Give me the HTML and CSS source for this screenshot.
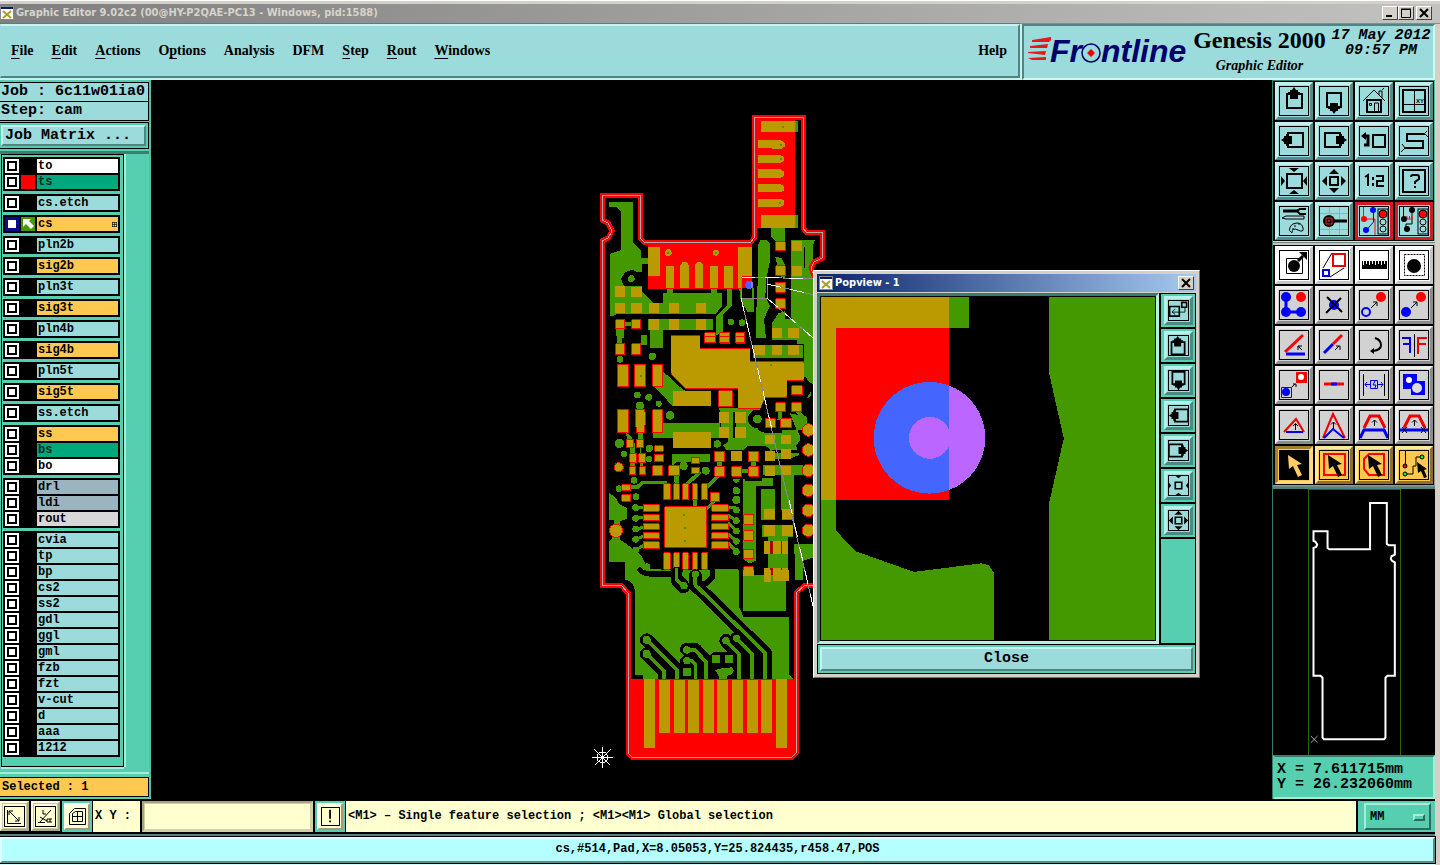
FILE: index.html
```html
<!DOCTYPE html>
<html lang="en">
<head>
<meta charset="utf-8">
<title>Graphic Editor 9.02c2</title>
<link rel="stylesheet" href="styles.css">
</head>
<body>
<svg class="defs" aria-hidden="true">
  <defs>
    <g id="app-x"><rect width="14" height="14" fill="#fff"/><rect width="14" height="3" fill="#0a1a6a"/><path d="M3 5l8 7M11 5l-8 7" stroke="#a8a020" stroke-width="2" fill="none"/><rect x=".5" y=".5" width="13" height="13" fill="none" stroke="#888"/></g>
    <g id="i-up"><path d="M8 8h15v14H8z" fill="none" stroke="#000" stroke-width="2"/><path d="M15 1l2 3h2v2h2v2h-2v5h-8V8H9V6h2V4h2z"/></g>
    <g id="i-down"><path d="M8 7h14v14H8z" fill="none" stroke="#000" stroke-width="2"/><path d="M15 28l-2-3h-2v-2H9v-2h2v-4h8v4h2v2h-2v2h-2z"/></g>
    <g id="i-left"><path d="M9 7h15v14H9z" fill="none" stroke="#000" stroke-width="2"/><path d="M2 14l3-2v-2h2V8h2v2h4v8H9v2H7v-2H5v-2z"/></g>
    <g id="i-right"><path d="M6 7h15v14H6z" fill="none" stroke="#000" stroke-width="2"/><path d="M28 14l-3 2v2h-2v2h-2v-2h-4v-8h4V8h2v2h2v2z"/></g>
    <g id="i-out"><path d="M11 11h8v8h-8z" fill="none" stroke="#000" stroke-width="2"/><path d="M15 3l5 5h-10zM15 27l5-5h-10zM3 15l5-5v10zM27 15l-5-5v10z"/></g>
    <g id="i-in"><path d="M15 6l-5-4h10zM15 24l-5 4h10zM6 15l-4-5v10zM24 15l4-5v10z"/></g>
    <g id="i-arrow"><path d="M9 5l1 14 4-3 5 11 4-2-5-10 5-1z"/></g>
    <g id="i-light"><rect x="19" y="3" width="10" height="25" fill="#9cdbdb" stroke="#000"/><circle cx="24" cy="8" r="4" fill="#f00" stroke="#000"/><circle cx="24" cy="16" r="3" fill="none" stroke="#000"/><circle cx="24" cy="23" r="3" fill="none" stroke="#000"/></g>
  </defs>
</svg>

<header class="titlebar">
  <svg class="appicon" viewBox="0 0 14 14"><use href="#app-x"/></svg>
  <h1 class="titletext">Graphic Editor 9.02c2 (00@HY-P2QAE-PC13 - Windows, pid:1588)</h1>
  <button class="winbtn" aria-label="Minimize"><svg viewBox="0 0 10 10"><path d="M1 8h6" stroke="#000" stroke-width="2"/></svg></button>
  <button class="winbtn" aria-label="Maximize"><svg viewBox="0 0 10 10"><path d="M.5 1.5h9v8h-9zM0 1h10" stroke="#000" fill="none"/></svg></button>
  <button class="winbtn winclose" aria-label="Close window"><svg viewBox="0 0 10 10"><path d="M1 1l8 8M9 1l-8 8" stroke="#000" stroke-width="2"/></svg></button>
</header>

<div class="app">
<div class="top">
  <nav class="menubar">
    <button class="menu"><u>F</u>ile</button>
    <button class="menu"><u>E</u>dit</button>
    <button class="menu"><u>A</u>ctions</button>
    <button class="menu">O<u>p</u>tions</button>
    <button class="menu">Analysis</button>
    <button class="menu">DFM</button>
    <button class="menu"><u>S</u>tep</button>
    <button class="menu"><u>R</u>out</button>
    <button class="menu"><u>W</u>indows</button>
    <button class="menu help">Help</button>
  </nav>
  <div class="brand">
    <svg class="logo" viewBox="0 0 166 44" role="img" aria-label="Frontline">
      <g fill="#e81818"><path d="M4 8l19-3v3l-2 2H4zM2 14l18-2-1 4H2zM0 20l18-1-1 4-17-2zM0 26l18-1v3H4z"/></g>
      <text x="22" y="30" class="logotext">Fr</text>
      <text x="73" y="30" class="logotext">ntline</text>
      <circle cx="63" cy="21" r="9" fill="none" stroke="#00006c" stroke-width="1.5"/>
      <path d="M63 17l4 4-4 4-4-4z" fill="#e00"/>
    </svg>
    <div class="product"><strong class="pname">Genesis 2000</strong><em class="psub">Graphic Editor</em></div>
    <time class="clock">17 May 2012<br>09:57 PM</time>
  </div>
</div>

<main class="work">
  <aside class="side">
    <div class="jobinfo">Job : 6c11w01ia0</div>
    <div class="jobinfo stepinfo">Step: cam</div>
    <div class="matrixbox"><button class="matrix">Job Matrix ...</button></div>
    <div class="layerarea">
      <div class="layers">
        <div class="grp">
          <label class="row"><input type="checkbox"><i></i><span class="white">to</span></label>
          <label class="row"><input type="checkbox"><i class="red"></i><span class="green">ts</span></label>
        </div>
        <div class="grp"><label class="row"><input type="checkbox"><i></i><span>cs.etch</span></label></div>
        <div class="grp"><label class="row"><input type="checkbox" checked><i class="work-layer"><svg viewBox="0 0 14 14"><path d="M2 2h8L8 4l5 5-3 3-5-5-3 3z" fill="#fff"/></svg></i><span class="gold">cs<svg class="mark" viewBox="0 0 5 5"><path d="M0 .5h5M0 2.500h5M0 4.500h5M.5 0v5M2.500 0v5M4.500 0v5" stroke="#000" stroke-width=".6"/></svg></span></label></div>
        <div class="grp"><label class="row"><input type="checkbox"><i></i><span>pln2b</span></label></div>
        <div class="grp"><label class="row"><input type="checkbox"><i></i><span class="gold">sig2b</span></label></div>
        <div class="grp"><label class="row"><input type="checkbox"><i></i><span>pln3t</span></label></div>
        <div class="grp"><label class="row"><input type="checkbox"><i></i><span class="gold">sig3t</span></label></div>
        <div class="grp"><label class="row"><input type="checkbox"><i></i><span>pln4b</span></label></div>
        <div class="grp"><label class="row"><input type="checkbox"><i></i><span class="gold">sig4b</span></label></div>
        <div class="grp"><label class="row"><input type="checkbox"><i></i><span>pln5t</span></label></div>
        <div class="grp"><label class="row"><input type="checkbox"><i></i><span class="gold">sig5t</span></label></div>
        <div class="grp"><label class="row"><input type="checkbox"><i></i><span>ss.etch</span></label></div>
        <div class="grp">
          <label class="row"><input type="checkbox"><i></i><span class="gold">ss</span></label>
          <label class="row"><input type="checkbox"><i></i><span class="green">bs</span></label>
          <label class="row"><input type="checkbox"><i></i><span class="white">bo</span></label>
        </div>
        <div class="grp">
          <label class="row"><input type="checkbox"><i></i><span class="slate">drl</span></label>
          <label class="row"><input type="checkbox"><i></i><span class="slate">ldi</span></label>
          <label class="row"><input type="checkbox"><i></i><span class="grey">rout</span></label>
        </div>
        <div class="grp">
          <label class="row"><input type="checkbox"><i></i><span>cvia</span></label>
          <label class="row"><input type="checkbox"><i></i><span>tp</span></label>
          <label class="row"><input type="checkbox"><i></i><span>bp</span></label>
          <label class="row"><input type="checkbox"><i></i><span>cs2</span></label>
          <label class="row"><input type="checkbox"><i></i><span>ss2</span></label>
          <label class="row"><input type="checkbox"><i></i><span>gdl</span></label>
          <label class="row"><input type="checkbox"><i></i><span>ggl</span></label>
          <label class="row"><input type="checkbox"><i></i><span>gml</span></label>
          <label class="row"><input type="checkbox"><i></i><span>fzb</span></label>
          <label class="row"><input type="checkbox"><i></i><span>fzt</span></label>
          <label class="row"><input type="checkbox"><i></i><span>v-cut</span></label>
          <label class="row"><input type="checkbox"><i></i><span>d</span></label>
          <label class="row"><input type="checkbox"><i></i><span>aaa</span></label>
          <label class="row"><input type="checkbox"><i></i><span>1212</span></label>
        </div>
      </div>
    </div>
    <div class="selected">Selected : 1</div>
  </aside>

  <section class="stage">
    <svg class="board" viewBox="151 80 1121 719" shape-rendering="crispEdges">
      <!-- top third of the board -->
      <g transform="translate(590 105) scale(.33333)">
        <g fill="#449900">
          <path d="M57 292h71v118l24 25v23h23v18h-20v24l-12 2-18-8-20 8-12 20 8 20-23 4v84l-18 4V447l33-11V318l-15-13H57z"/>
          <circle cx="124" cy="521" r="10"/>
          <path d="M155 560l35 35h30v-32h12v-15h18v15h112v-15h20v15h14v42l-20 22H75v-84h80z"/>
          <path d="M175 643h193v32H180v40h38v-40h-43z"/>
          <path d="M412 548h14v55l-28 28v50l-20 10v-55l34-36z"/>
          <circle cx="423" cy="651" r="10"/><circle cx="456" cy="653" r="10"/>
          <path d="M543 365h42v43h-30l-12-15z"/>
          <path d="M512 405h18l10 12v50l-12 60-2 50 14 25-18 40 6 58h-30v-60l5-105V420z"/>
          <path d="M448 550h44v70h-20l-22-40zM555 455l20 4 10 20v140l-20 6-20 30 8 45h117V405h5l-30 15v70l-38-2v155h-22V520l-12-5z"/>
          <path d="M603 405h72l-5 12-28 10v70l20 30v20l8 20v150h-50V640h-17z"/>
          <path d="M78 670h24v30H80zM152 690h20v30h-20zM545 670h90v35h-90zM82 683h15v30h-15zM90 650h60v14H90z"/>
        </g>
        <path fill="#f00" d="M174 420h280v131H174zM444 420h41v131h-41zM495 38h120v294h-120zM495 332h20v36h-20z"/>
        <path fill="#000" d="M615 38h21v330h-13v-36h-8z"/>
        <path fill="#449900" d="M615 48h9v33h-9zM615 330h9v38h-9z"/>
        <g fill="#bb9900">
          <path d="M513 48h102v33H513zM513 330h102v38H513zM504 105h66l14 8v12l-10 6h-28l-6-2h-36zM504 150h66l12 6v11l-10 7h-68zM504 192h66l12 8v12l-10 7h-68zM504 237h66l12 7v12l-10 5h-68zM504 282h68l10 5v13l-10 6h-68z"/>
          <path d="M174 426h36v88h-36zM444 426h41v88h-41zM228 483h24v67h-24zM270 550v-68l8-11h12l7 11v68zM315 550v-70l7-9h10l7 9v70zM360 483h24v67h-24zM402 483h27v67h-27zM444 514h11v36h-11z"/>
          <circle cx="235" cy="443" r="10"/><circle cx="378" cy="443" r="9"/>
          <path d="M75 543h29v33H75zM124 545h31v31h-31zM75 594h29v30H75zM124 594h31v30h-31zM177 594h29v30h-29zM237 594h29v30h-29zM318 594h30v30h-30zM177 643h29v32h-29zM237 643h29v32h-29zM318 643h30v32h-30z"/>
        </g>
        <g fill="#bb9900" stroke="#f00" stroke-width="3">
          <path d="M77 644h27v28H77zM125 644h28v28h-28zM245 695h83v30h-83zM344 683h32v30h-32zM390 683h30v32h-30zM437 683h28v32h-28zM557 410h29v27h-29zM557 483h29v29h-29zM557 532h29v30h-29zM557 582h29v29h-29z"/>
        </g>
        <path fill="#bb9900" d="M606 408h29v29h-29zM606 483h29v29h-29zM546 669h29v30h-29zM595 669h31v30h-31z"/>
        <g fill="#449900"><path d="M576 62h6v6h-6zM570 117h6v6h-6zM570 159h6v6h-6zM567 291h6v6h-6zM232 440h6v6h-6zM375 440h6v6h-6z"/></g>
        <path fill="#f00" d="M455 517h28v34h-28z"/><path fill="#000" d="M455 550h32v28h-32z"/>
        <circle cx="478" cy="540" r="12" fill="#4466ff"/><path d="M484 531a12 12 0 0 1 0 20z" fill="#bb66ff"/>
      </g>

      <!-- middle of the board -->
      <g transform="translate(590 340) scale(.33333)">
        <g fill="#449900">
          <path d="M57 458l20 15 10 18 24 14v30l-21 10v54l18 12 45 35 20 40h40v34H105v-53H57v-62l16-20V540H57z"/>
          <path d="M218 92l67 58v20l-37 28-53-56zM165 250h225v43H188v-43z"/>
          <path d="M388 205h122l8 20-15 45 25 10h100l2 20-12 18 10 26-30 14h-50l-10-34-14-6h-50l-15 12h-50l-10-14 15-10v-20h-18z"/>
          <path d="M247 342h112v24H258l-11 14z"/>
          <path d="M460 415h90v22h-53v226l-20 8-17-15zM513 447h42v92h-42zM573 400h38v140h-36zM515 555h95v37h-95zM535 592h60v128h-60zM575 270h50v22h-50z"/>
          <path d="M642 0h28v132l-28-12zM600 220l50 10v40h-30zM595 180l55 55v15h-10zM490 15h150v40H490zM613 612h57v40l-30 10v58h-25zM520 375h120v30H520zM180 0h38v23h-38z"/>
          <path d="M375 688h68v32h-68zM253 660h10v60h-10zM110 435h30l15-12h75v10h-70l-15 15h-35zM250 390h18v60h-12zM282 432l45-40 8 8-45 40zM345 440l45-45 8 8-45 44zM144 260h14v50h-14zM105 275l20 15v20h-8z"/>
          <path d="M308 478h14v30h-14zM340 510l30-30 8 6-30 30zM120 310h14v90h-14zM150 310l10 80h-10zM382 350h14v50h-14zM483 350h14v50h-14zM568 200h8v40h-14z"/>
          <circle cx="142" cy="165" r="10"/><circle cx="176" cy="172" r="10"/><circle cx="206" cy="191" r="9"/><circle cx="240" cy="226" r="13"/><circle cx="187" cy="49" r="11"/><circle cx="150" cy="197" r="12"/><circle cx="90" cy="58" r="10"/>
          <circle cx="88" cy="310" r="14"/><circle cx="102" cy="342" r="9"/><circle cx="178" cy="325" r="11"/><circle cx="177" cy="357" r="9"/><circle cx="382" cy="312" r="11"/><circle cx="347" cy="392" r="12"/><circle cx="281" cy="378" r="12"/><circle cx="132" cy="421" r="10"/><circle cx="87" cy="446" r="10"/><circle cx="138" cy="470" r="10"/>
          <circle cx="439" cy="418" r="10"/><circle cx="439" cy="452" r="11"/><circle cx="439" cy="480" r="12"/><circle cx="652" cy="163" r="11"/>
          <circle cx="171" cy="680" r="10"/><circle cx="287" cy="705" r="11"/><circle cx="316" cy="702" r="11"/><circle cx="347" cy="705" r="11"/>
          <circle cx="137" cy="503" r="10"/><circle cx="137" cy="535" r="10"/><circle cx="137" cy="567" r="10"/><circle cx="137" cy="598" r="10"/><circle cx="137" cy="630" r="10"/>
          <circle cx="439" cy="510" r="10"/><circle cx="439" cy="542" r="10"/><circle cx="439" cy="573" r="10"/><circle cx="439" cy="604" r="10"/><circle cx="439" cy="635" r="10"/>
        </g>
        <path d="M137 503h25M137 535l25-4M137 567l25-5M137 598l25-10M137 630l25-15M414 504h25M414 525l25 17M414 548l25 25M414 580l25 24M414 608l25 27" stroke="#449900" stroke-width="9"/>
        <circle cx="502" cy="237" r="28" fill="#000"/><circle cx="502" cy="237" r="13" fill="#449900"/>
        <path d="M597 120h45l10 15v20l-20 30 30 20v40M600 140v40l-25-2-20 10-20 40" fill="none" stroke="#000" stroke-width="18"/>
        <path d="M545 330h90v8h-90zM480 362h190v12H480zM515 541h95v14h-95zM430 215h8v80h-8z"/>
        <path d="M465 323h52v100h-52zM415 370h50v48h-50z"/>
        <path fill="#449900" d="M483 350h14v50h-14zM382 350h14v50h-14zM433 388h60v12h-60z"/>
        <path d="M218 82l67 62" stroke="#000" stroke-width="16"/>
        <path fill="#bb9900" stroke="#f00" stroke-width="3" d="M244-15h84v41h151v39h163v57h-52v50h-65l-14 33h-66v-60H286l-42-42z"/>
        <path fill="#bb9900" d="M244-12h86v40h149v40h163v50h-52v50h-65l-14 37h-66v-62H292l-48-44z"/>
        <g fill="#bb9900" stroke="#f00" stroke-width="3">
          <path d="M77 12h27v32H77zM125 12h28v32h-28zM82 73h34v68H82zM133 73h33v68h-33zM188 73h30v66h-30zM82 210h34v68H82zM188 210h30v68h-30zM136 210h28l4 22-6 46h-22l-5-40z"/>
          <path d="M387 152h40v48h-40zM606 137h31v27h-31zM557 188h29v28h-29zM606 188h28v28h-28zM526 236h30v28h-30zM573 236h32v28h-32z"/>
          <path d="M110 298h20v25h-20zM141 298h19v25h-19zM194 317h26v17h-26zM120 342h20v25h-20zM146 342h21v25h-21zM194 343h26v22h-26zM120 381h18v24h-18zM150 381h18v24h-18zM188 378h30v30h-30zM236 378h33v30h-33zM304 354h25v17h-25zM304 384h26v18h-26z"/>
          <path d="M375 334h30v31h-30zM375 381h30v28h-30zM477 334h29v31h-29zM477 381h29v28h-29zM426 381h29v28h-29zM361 459h27v27h-27z"/>
          <path d="M95 434h28v18H95zM95 464h28v20H95z"/>
          <path d="M224 500h126v122H224zM160 494h48v20h-48zM160 524h48v19h-48zM160 551h48v19h-48zM160 579h48v18h-48zM160 606h48v20h-48zM365 494h50v20h-50zM365 524h50v19h-50zM365 551h50v19h-50zM365 579h50v18h-50zM365 606h50v20h-50z"/>
          <path d="M222 432h19v48h-19zM252 432h16v48h-16zM278 432h17v48h-17zM307 432h15v48h-15zM335 432h18v48h-18zM222 638h19v50h-19zM252 638h16v50h-16zM278 638h17v50h-17zM307 638h15v50h-15zM335 638h18v50h-18z"/>
          <path d="M461 524h30v29h-30zM461 572h29v29h-29zM461 628h29v29h-29zM461 680h29v28h-29zM344-10h32v18h-32zM390-10h30v18h-30zM437-10h28v18h-28z"/>
          <circle cx="86" cy="382" r="14"/><circle cx="78" cy="572" r="20"/>
          <circle cx="655" cy="270" r="19"/><circle cx="655" cy="330" r="19"/><circle cx="655" cy="391" r="19"/><circle cx="655" cy="451" r="19"/><circle cx="655" cy="511" r="19"/><circle cx="655" cy="571" r="19"/>
        </g>
        <path fill="#bb9900" d="M248 152h115v46H248zM248 277h115v46H248zM387 217h30v31h-30zM387 262h30v31h-30zM436 217h31v31h-31zM436 262h31v31h-31zM493 16h32v29h-32zM546 16h29v29h-29zM595 16h31v29h-31zM525 284h30v29h-30zM573 284h30v29h-30zM525 332h30v32h-30zM573 328h30v30h-30zM525 378h30v31h-30zM573 378h30v28h-30zM423 334h32v30h-32zM522 507h32v29h-32zM576 507h32v29h-32zM522 556h32v32h-32zM576 556h32v32h-32zM522 603h73v39h-73zM522 684h73v36h-73z"/>
        <path fill="#a00" d="M541 603h9v39h-9zM572 603h4v39h-4zM541 684h9v36h-9zM572 684h4v36h-4z"/>
        <path d="M279 522h6v6h-6zM282 561h6v6h-6zM282 600h6v6h-6zM150 105h5v5h-5zM540 72h6v6h-6z" fill="#449900"/>
      </g>

      <!-- lower part with the edge connector -->
      <g transform="translate(590 570) scale(.33333)">
        <path fill="#449900" d="M105 0h342v110l13 30h138v175l12 12H160v-12h-25V60l-8-20-22-15zM460 15h128v107H460zM615 0h13v30h-13z"/>
        <g fill="none" stroke="#000" stroke-linejoin="round" stroke-linecap="round">
          <path stroke-width="16" d="M150 0q10 12 35 12h70l20 40M368 0v20l-22 22h-20"/>
          <path stroke-width="40" d="M316 18v27l210 205v77M440 205l47 48v74M408 212l39 40v75M170 210l92 92v25M170 252l53 53v22M290 238h25l33 36v53M290 275h15l12 12v40M262 10v20l18 20"/>
          <path stroke-width="42" d="M378 267h38M291 305h10M385 303h32"/>
        </g>
        <path fill="#000" d="M240 327l20-20h170v20z"/>
        <g fill="none" stroke="#449900" stroke-width="11" stroke-linejoin="round">
          <path d="M316 10v35l209 203v79M440 205l47 48v74M408 212l39 40v75M170 210l92 92v25M170 252l53 53v22M290 240h25l33 36v51M290 272h15l12 12v43M260-5v35l20 17"/>
        </g>
        <g fill="#449900"><circle cx="170" cy="210" r="12"/><circle cx="170" cy="252" r="12"/><circle cx="290" cy="240" r="11"/><circle cx="291" cy="272" r="11"/><circle cx="408" cy="212" r="11"/><circle cx="440" cy="205" r="11"/><circle cx="287" cy="13" r="11"/><circle cx="316" cy="13" r="11"/><circle cx="347" cy="13" r="11"/><circle cx="282" cy="47" r="11"/>
        <path d="M279 293h24v26h-24zM366 255h24v24h-24zM404 255h24v24h-24zM375 300l25-6 26-2 6 10-8 12h-10l-4 14h-22l-4-15z"/></g>
        <path fill="#f00" d="M118 327h496v230H118z"/>
        <path fill="#bb9900" d="M162 327h33v206h-33zM207 330h33v158h-33zM252 330h33v158h-33zM294 330h33v158h-33zM339 330h33v158h-33zM381 330h33v158h-33zM426 330h33v158h-33zM471 330h33v158h-33zM513 330h33v158h-33zM558 327h33v206h-33zM460 0h31v17h-31zM522 0h20v35h-20zM550 0h46v33h-46z"/>
        <path stroke="#fff" stroke-width="3" fill="none" d="M37 531v62M6 562h62M13 538l48 48M61 538l-48 48M37 545l12 5 5 12-5 12-12 5-12-5-5-12 5-12z"/>
      </g>

      <!-- board profile -->
      <g fill="none">
        <path stroke="#f00" stroke-width="5" d="M602 195h38v43l4 4h107l3-4V117h49v111l3 4h16v26l-8 4-3 6 3 8 8 4v305h-17l-9 8v160l-4 4H632l-4-4V593l-7-8h-19V241l6-3 4-7-4-8-6-3z"/>
        <path stroke="#aaa" d="M602 195h38v43l4 4h107l3-4V117h49v111l3 4h16v26l-8 4-3 6 3 8 8 4v305h-17l-9 8v160l-4 4H632l-4-4V593l-7-8h-19V241l6-3 4-7-4-8-6-3z"/>
        <path stroke="#888" d="M741 277h26v21h-26zM741 277l82 2M767 284l52 12M767 298l53 46M741 298l72 308"/>
        <path stroke="#fff" stroke-dasharray="14 10" d="M741 277l82 2M767 284l52 12M767 298l53 46M741 298l32 136M789 500l24 106"/>
      </g>
    </svg>

    <div class="popup" role="dialog" aria-label="Popview - 1">
      <div class="poptitle">
        <svg class="appicon" viewBox="0 0 14 14"><use href="#app-x"/></svg>
        <h2 class="titletext">Popview - 1</h2>
        <button class="winbtn" aria-label="Close popview"><svg viewBox="0 0 10 10"><path d="M1 1l8 8M9 1l-8 8" stroke="#000" stroke-width="2"/></svg></button>
      </div>
      <div class="popbody">
        <div class="popview">
          <svg viewBox="33 96 1007 1033" preserveAspectRatio="none" shape-rendering="crispEdges">
            <path fill="#000" d="M33 96h1007v1033H33z"/>
            <path fill="#449900" d="M420 96h60v93h-60zM720 96h320v1033H720V720l45-198-45-200zM33 708h45v92l60 62 175 62 204-26 22 6 16 24v201H33z"/>
            <path fill="#f00" d="M78 189h342v519H78z"/>
            <path fill="#bb9900" d="M33 96h387v93H78v519H33z"/>
            <circle cx="360" cy="520" r="168" fill="#4466ff"/>
            <path fill="#bb66ff" d="M420 363a168 168 0 0 1 0 314zM420 498a63 63 0 1 0 0 44z"/>
          </svg>
        </div>
        <div class="poptools">
          <button class="ptool" aria-label="Locate"><svg class="ico" viewBox="3 2 26 26"><path d="M5 10h12v12H5zM20 5h6v6h-6z" fill="none" stroke="#000" stroke-width="2"/><path d="M24 11v6H8M12 13l-4 4 4 3" fill="none" stroke="#000"/></svg></button>
          <button class="ptool" aria-label="Pan up"><svg class="ico" viewBox="4 0 24 24"><use href="#i-up"/></svg></button>
          <button class="ptool" aria-label="Pan down"><svg class="ico" viewBox="3 5 24 24"><use href="#i-down"/></svg></button>
          <button class="ptool" aria-label="Pan left"><svg class="ico" viewBox="1 2 24 24"><use href="#i-left"/></svg></button>
          <button class="ptool" aria-label="Pan right"><svg class="ico" viewBox="5 2 24 24"><use href="#i-right"/></svg></button>
          <button class="ptool" aria-label="Zoom in"><svg class="ico" viewBox="2 2 26 26"><use href="#i-in"/><path d="M11 11h8v8h-8z" fill="none" stroke="#000" stroke-width="2"/></svg></button>
          <button class="ptool" aria-label="Zoom out"><svg class="ico" viewBox="2 2 26 26"><use href="#i-out"/></svg></button>
        </div>
      </div>
      <div class="popfoot"><button class="popclose">Close</button></div>
    </div>
  </section>

  <aside class="tools">
    <div class="grid">
      <button class="tool" aria-label="Pan up"><svg class="ico" viewBox="1 1 28 28"><use href="#i-up"/></svg></button>
      <button class="tool" aria-label="Pan down"><svg class="ico" viewBox="1 1 28 28"><use href="#i-down"/></svg></button>
      <button class="tool" aria-label="Home"><svg class="ico" viewBox="1 1 28 28"><path d="M4 15L15 4l11 11M20 9V5h3v7M23 4l2-2" fill="none" stroke="#000"/><path d="M8 14h14v12H8z" fill="none" stroke="#000" stroke-width="2"/><path d="M10.500 17.500h2v2h-2zM15.500 26v-9h4v9" fill="none" stroke="#000"/></svg></button>
      <button class="tool" aria-label="View XY"><svg class="ico" viewBox="1 1 28 28"><path d="M4 4h22v22H4z" fill="none" stroke="#000" stroke-width="2"/><path d="M15.500 4v22M4 18.500h22" stroke="#000"/><text x="17" y="17" class="tinytext">XY</text></svg></button>
      <button class="tool" aria-label="Pan left"><svg class="ico" viewBox="1 1 28 28"><use href="#i-left"/></svg></button>
      <button class="tool" aria-label="Pan right"><svg class="ico" viewBox="1 1 28 28"><use href="#i-right"/></svg></button>
      <button class="tool" aria-label="Previous view"><svg class="ico" viewBox="1 1 28 28"><path d="M14 9h12v12H14z" fill="none" stroke="#000" stroke-width="2"/><path d="M6 10h3v9H5" fill="none" stroke="#000" stroke-width="3"/><path d="M2 10l5-4v8z"/></svg></button>
      <button class="tool" aria-label="Serpentine"><svg class="ico" viewBox="1 1 28 28"><path d="M26 8H8v7h16v7H6" fill="none" stroke="#000" stroke-width="2"/><path d="M25 8l3-3M26 8l3 3M6 22l-3-4M6 22l-4 4" stroke="#000" fill="none"/></svg></button>
      <button class="tool" aria-label="Zoom in"><svg class="ico" viewBox="1 1 28 28"><path d="M8 8h15v14H8z" fill="none" stroke="#000" stroke-width="2"/><use href="#i-in"/></svg></button>
      <button class="tool" aria-label="Zoom out"><svg class="ico" viewBox="1 1 28 28"><use href="#i-out"/></svg></button>
      <button class="tool" aria-label="Scale 1:2"><svg class="ico" viewBox="1 1 28 28"><path d="M6 11l3-2v11M14 11v3M14 17v3M17 10h7v5h-6v5h7" fill="none" stroke="#000" stroke-width="2"/></svg></button>
      <button class="tool" aria-label="Query"><svg class="ico" viewBox="1 1 28 28"><path d="M4 4h22v22H4z" fill="none" stroke="#000" stroke-width="2"/><path d="M12 11q0-2 2-2h4q2 0 2 2v2l-4 3v2M16 20v2" fill="none" stroke="#000" stroke-width="2"/></svg></button>
      <button class="tool" aria-label="Settings"><svg class="ico" viewBox="1 1 28 28"><path d="M4 5h15" stroke="#000" stroke-width="3"/><path d="M27 3h-6l-3 2 3 3h6" fill="none" stroke="#000" stroke-width="2"/><path d="M3 12l4-2h18v3H7z" fill="none" stroke="#000"/><path d="M13 27q-4-2-2-6t7-4 6 5-5 2-6 3zM15 20h2M19 18h2M13 23h2" fill="none" stroke="#000"/></svg></button>
      <button class="tool" aria-label="Snap grid"><svg class="ico" viewBox="1 1 28 28"><path d="M10.500 1v28M20.500 1v28M1 7.500h28M1 23.500h28" stroke="#c99" /><circle cx="10" cy="15" r="6"/><path d="M14 15h14" stroke="#000" stroke-width="3"/><path d="M7 12h6v6H7zM9.500 14.500h1v1h-1z" fill="none" stroke="#f22"/></svg></button>
      <button class="tool alert" aria-label="Online check nets"><svg class="ico" viewBox="1 1 28 28"><path d="M4.500 1v11M5 13h11v16" stroke="#e11" fill="none"/><path d="M14.500 4v12l-7 8" stroke="#00e" fill="none"/><circle cx="5" cy="13" r="3" fill="#f00"/><circle cx="14" cy="4" r="3" fill="#00f"/><circle cx="7" cy="24" r="3" fill="#00f"/><use href="#i-light"/></svg></button>
      <button class="tool alert" aria-label="Online check spacing"><svg class="ico" viewBox="1 1 28 28"><path d="M4.500 1v12M13 4v14H7v6" stroke="#000" fill="none"/><path d="M8 10v3h5v-3M10.500 10v3" stroke="#e11" fill="none"/><circle cx="5" cy="13" r="3"/><circle cx="13" cy="4" r="3"/><circle cx="8" cy="23" r="3"/><use href="#i-light"/></svg></button>
    </div>
    <div class="split"></div>
    <div class="grid edit">
      <button class="tool on" aria-label="Select feature"><svg class="ico" viewBox="1 1 28 28"><path d="M7.500 8.500h16v15h-16z" fill="none" stroke="#000"/><circle cx="15" cy="16" r="6"/><path d="M19 11l5-5" stroke="#000" stroke-width="3"/><path d="M20 2h8v8z"/></svg></button>
      <button class="tool on" aria-label="Compare"><svg class="ico" viewBox="1 1 28 28"><path d="M14 4h12v12H14z" fill="none" stroke="#e00" stroke-width="2"/><path d="M4 20h6v6H4z" fill="none" stroke="#00e" stroke-width="2"/><path d="M4 18L13 3M11 27l14-9" stroke="#000" fill="none"/></svg></button>
      <button class="tool on" aria-label="Measure"><svg class="ico" viewBox="1 1 28 28"><path d="M3 11h25v8H3z"/><path d="M4.500 11v4M7.500 11v3M10.500 11v4M13.500 11v3M16.500 11v4M19.500 11v3M22.500 11v4M25.500 11v3" stroke="#fff"/></svg></button>
      <button class="tool on" aria-label="Area highlight"><svg class="ico" viewBox="1 1 28 28"><path d="M5.500 4.500h20v21h-20z" fill="none" stroke="#000" stroke-dasharray="2 1"/><circle cx="15" cy="16" r="7"/></svg></button>

      <button class="tool" aria-label="Add feature"><svg class="ico" viewBox="1 1 28 28"><path d="M7 7v15h15" fill="none" stroke="#00f" stroke-width="3"/><circle cx="7" cy="7" r="5" fill="#00f"/><circle cx="7" cy="22" r="5" fill="#00f"/><circle cx="22" cy="22" r="5" fill="#00f"/><circle cx="22" cy="7" r="5" fill="#f00"/></svg></button>
      <button class="tool" aria-label="Delete"><svg class="ico" viewBox="1 1 28 28"><circle cx="15" cy="15" r="5" fill="#00f"/><path d="M8 7l15 15M22 8L7 23" stroke="#000" stroke-width="2"/></svg></button>
      <button class="tool" aria-label="Move"><svg class="ico" viewBox="1 1 28 28"><circle cx="7" cy="22" r="4" fill="none" stroke="#00f" stroke-width="2"/><circle cx="22" cy="7" r="5" fill="#f00"/><path d="M12 18l6-6M14 12h4v4" stroke="#000" fill="none"/></svg></button>
      <button class="tool" aria-label="Copy"><svg class="ico" viewBox="1 1 28 28"><circle cx="7" cy="22" r="5" fill="#00f"/><circle cx="22" cy="7" r="5" fill="#f00"/><path d="M12 18l6-6M14 12h4v4" stroke="#000" fill="none"/></svg></button>

      <button class="tool" aria-label="Rotate line"><svg class="ico" viewBox="1 1 28 28"><path d="M7 24h19" stroke="#00f" stroke-width="3"/><path d="M6 22L24 5" stroke="#f00" stroke-width="3"/><path d="M23 20l-4-4v4M19 16h4" stroke="#000" fill="none"/></svg></button>
      <button class="tool" aria-label="Extend line"><svg class="ico" viewBox="1 1 28 28"><path d="M5 23l9-9" stroke="#00f" stroke-width="3"/><path d="M14 14l9-9" stroke="#f00" stroke-width="3"/><path d="M16 20l4-4M17 16h4v4" stroke="#000" fill="none"/></svg></button>
      <button class="tool" aria-label="Rotate"><svg class="ico" viewBox="1 1 28 28"><path d="M16 8q6 2 6 7t-8 6" fill="none" stroke="#000" stroke-width="2"/><path d="M11 21l4-3v6z"/></svg></button>
      <button class="tool" aria-label="Mirror"><svg class="ico" viewBox="1 1 28 28"><path d="M3 8h8v15M12 14H4" fill="none" stroke="#00e" stroke-width="2"/><path d="M28 8h-9v16M19 14h8" fill="none" stroke="#e00" stroke-width="2"/><path d="M15.500 4v23" stroke="#000"/></svg></button>

      <button class="tool" aria-label="Change symbol"><svg class="ico" viewBox="1 1 28 28"><path d="M17 2h11v11H17z" fill="#f00"/><circle cx="22" cy="7" r="3" fill="#fff"/><path d="M2.500 17.500h10v10h-10z" fill="none" stroke="#00f"/><circle cx="7" cy="22" r="4" fill="#00f"/><path d="M13 17l3-3M14 14h3v3" stroke="#000" fill="none"/></svg></button>
      <button class="tool" aria-label="Break line"><svg class="ico" viewBox="1 1 28 28"><path d="M5 14h20" stroke="#f00" stroke-width="3"/><path d="M12 14h6" stroke="#00f" stroke-width="3"/></svg></button>
      <button class="tool" aria-label="Spacing"><svg class="ico" viewBox="1 1 28 28"><path d="M4.500 4v22M25.500 4v22" stroke="#000"/><path d="M11.500 10.500h7v8h-7zM11 14.500H6M8 12l-2 2.500L8 17M19 14.500h5M22 12l2 2.500-2 2.500M16 11l-2 4h3l-1 3" fill="none" stroke="#00d"/></svg></button>
      <button class="tool" aria-label="Merge"><svg class="ico" viewBox="1 1 28 28"><path d="M4 4h14v7h8v14H12v-6H4z" fill="#00f"/><circle cx="10" cy="10" r="3" fill="#fff"/><circle cx="18" cy="18" r="5" fill="#ddd"/></svg></button>

      <button class="tool" aria-label="Stretch corner"><svg class="ico" viewBox="1 1 28 28"><path d="M5 22L17 9l8 13" fill="none" stroke="#e00" stroke-width="2"/><path d="M7 22h17" stroke="#00f" stroke-width="2"/><path d="M16.500 20v-6M14 16l2.500-2.500L19 16" stroke="#000" fill="none"/></svg></button>
      <button class="tool" aria-label="Stretch angle"><svg class="ico" viewBox="1 1 28 28"><path d="M4 28L14 4l12 24" fill="none" stroke="#e00" stroke-width="2"/><path d="M5 28l9-9 11 9" fill="none" stroke="#00f" stroke-width="2"/><path d="M14.500 19v-7M12 14.500l2.500-2.500 2.500 2.500" stroke="#000" fill="none"/></svg></button>
      <button class="tool" aria-label="Move segment"><svg class="ico" viewBox="1 1 28 28"><path d="M5 18l6-12h9l6 12" fill="none" stroke="#e00" stroke-width="3"/><path d="M1 28l4-8h20l4 8" fill="none" stroke="#00f" stroke-width="3"/><path d="M15.500 16v-6M13 12.500l2.500-2.500 2.500 2.500" stroke="#000" fill="none"/></svg></button>
      <button class="tool" aria-label="Move segment fixed"><svg class="ico" viewBox="1 1 28 28"><path d="M5 18l6-12h9l6 12" fill="none" stroke="#e00" stroke-width="3"/><path d="M1 20h28" stroke="#00f" stroke-width="3"/><path d="M15.500 16v-6M13 12.500l2.500-2.500 2.500 2.500M3 17l5 6M8 17l-5 6M22 17l5 6M27 17l-5 6" stroke="#000" fill="none"/></svg></button>

      <button class="tool amber sel" aria-label="Pointer"><svg class="ico" viewBox="1 1 28 28" fill="#fc6"><use href="#i-arrow"/></svg></button>
      <button class="tool amber" aria-label="Rectangle select"><svg class="ico" viewBox="1 1 28 28"><path d="M5 4h21v21H5z" fill="none" stroke="#f00" stroke-width="2"/><use href="#i-arrow"/></svg></button>
      <button class="tool amber" aria-label="Polygon select"><svg class="ico" viewBox="1 1 28 28"><path d="M10 4h15v21H10l-5-6V9z" fill="none" stroke="#f00" stroke-width="2"/><use href="#i-arrow"/></svg></button>
      <button class="tool amber" aria-label="Net select"><svg class="ico" viewBox="1 1 28 28"><path d="M6.500 1v15M5 24h9v-8h3V7h6" fill="none" stroke="#000"/><circle cx="6" cy="16" r="2" fill="#e00" stroke="#000"/><circle cx="6" cy="24" r="2" fill="#2e2" stroke="#000"/><circle cx="23" cy="7" r="2" fill="#2e2" stroke="#000"/><path d="M18 12l1 11 3-2 3 7 3-1-3-7 3-1z"/></svg></button>
    </div>
    <div class="split lower"></div>
    <svg class="overview" viewBox="10 12 484 792" preserveAspectRatio="xMidYMin meet">
      <path d="M115 806V13h276v793" fill="none" stroke="#449900" stroke-width="2" shape-rendering="crispEdges"/>
      <path d="M131 138h42v50l5 4h122V54h50v122l6 4h18v28l-10 5-2 8 4 6 8 4v339h-22l-6 6v178l-4 6H162l-4-5V576l-6-6h-21V188l8-3 3-7-5-8-6-3z" fill="none" stroke="#fff" stroke-width="6"/>
      <path d="M123 750l20 20M143 750l-20 20" stroke="#fff" stroke-width="2"/>
    </svg>
    <output class="coords">X = 7.611715mm<br>Y = 26.232060mm</output>
  </aside>
</main>

<div class="cmd">
  <button class="cbtn" aria-label="Relative"><svg class="ico" viewBox="1 1 19 19"><path d="M3.500 4v13.500H17M5 5l10 10M5 9V5h4M15 11v4h-4" fill="none" stroke="#000"/></svg></button>
  <button class="cbtn" aria-label="Angle"><svg class="ico" viewBox="1 1 19 19"><path d="M16 4L5 16M3 16.500h7M8 4v4h3M5 11l7 4M12 13h3v3h-3zM15 13h2M15 16h2" fill="none" stroke="#000"/></svg></button>
  <div class="cmark"><button class="cbtn" aria-label="Grid"><svg class="ico noframe" viewBox="1 1 19 19"><path d="M2.500 7.500l5-5h11v16h-16zM5.500 7.500l3-2h7v10h-10zM5 10.500h11M10.500 5v11" fill="none" stroke="#000"/></svg></button></div>
  <label class="xy" for="xy">X Y :</label>
  <input class="xyfield" id="xy" type="text">
  <div class="cmark"><button class="cbtn" aria-label="Attention"><svg class="ico" viewBox="1 1 19 19"><path d="M9 3h2v10H9zM9 15h2v2H9z"/></svg></button></div>
  <p class="message">&lt;M1&gt; – Single feature selection ; &lt;M1&gt;&lt;M1&gt; Global selection</p>
  <div class="unitbox"><select class="unit" aria-label="Units"><option>MM</option><option>INCH</option></select><span class="knob"></span></div>
</div>
<footer class="statusbar"><p class="status">cs,#514,Pad,X=8.05053,Y=25.824435,r458.47,POS</p></footer>
</div>
</body>
</html>
```
FILE: styles.css
```css
* { box-sizing: border-box; }
body {
  margin: 0; min-height: 100vh; display: flex; flex-direction: column;
  background: #d4d0c8; color: #000;
  font: bold 12px/14px "Liberation Mono", monospace;
  overflow: hidden;
}
button, input, select { font: inherit; color: inherit; border-radius: 0; }
button { padding: 0; margin: 0; border: 0; background: none; }
h1, h2, p { margin: 0; }
.defs { display: block; width: 0; height: 0; position: absolute; }

/* window title bars */
.titlebar, .poptitle { display: flex; align-items: center; }
.titlebar {
  height: 24px; padding: 2px 8px 0 0; border-top: 1px solid #fff; border-bottom: 1px solid #8a8a86;
  background: linear-gradient(90deg, #7f7f7f, #c2c2c0);
  box-shadow: inset 0 3px #d4d0c8;
}
.appicon { width: 14px; height: 14px; margin-right: 2px; flex: none; }
.titletext { flex: 1; font: bold 11px/16px "DejaVu Sans Condensed", sans-serif; color: #d8d4cc; white-space: nowrap; }
.winbtn {
  width: 16px; height: 14px; background: #d4d0c8; display: flex; align-items: center; justify-content: center;
  border: 1px solid; border-color: #fff #404040 #404040 #fff;
}
.winbtn svg { width: 10px; height: 10px; }
.winclose { margin-left: 2px; }

.app { flex: 1; display: flex; flex-direction: column; margin-right: 5px; }

/* menu and brand */
.top { display: flex; height: 56px; background: #c8f2f0; }
.menubar {
  flex: 1; display: flex; align-items: center; padding: 0 11px 0 10px; gap: 18px; margin-bottom: 2px; margin-right: 2px;
  background: #9cdbdb; border: 2px solid; border-color: #c8f2f0 #4f8482 #4f8482 #9cdbdb; border-left-width: 1px;
  box-shadow: 0 -1px #4f8482;
}
.menu { font: bold 14px/18px "Liberation Serif", serif; }
.menu u { text-underline-offset: 3px; text-decoration-thickness: 1px; }
.help { margin-left: auto; }
.brand {
  width: 413px; flex: none; display: flex; align-items: flex-start; padding-left: 4px;
  background: #9cdbdb; border: 2px solid; border-color: #4f8482 #d4f6f2 #d4f6f2 #4f8482;
}
.logo { width: 166px; height: 44px; margin: 6px -4px 0 0; flex: none; }
.logotext { font: italic bold 32px/32px "Liberation Sans", sans-serif; fill: #00006c; }
.tinytext { font: bold 6px/6px "Liberation Sans", sans-serif; }
.product { width: 137px; margin-left: 1px; display: flex; flex-direction: column; align-items: center; white-space: nowrap; }
.pname { font: bold 24px/28px "Liberation Serif", serif; }
.psub { font: italic bold 14px/16px "Liberation Serif", serif; margin-top: 4px; }
.clock { flex: 1; font: italic bold 15px/15px "Liberation Mono", monospace; text-align: center; white-space: nowrap; padding: 2px 0 0 1px; }

/* layout */
.work { flex: 1; display: flex; background: #000; min-height: 0; }
.side { width: 151px; flex: none; display: flex; flex-direction: column; background: #56cfb0; padding-top: 2px; border-right: 2px solid #56bfa4; border-bottom: 2px solid #56cfb0; }
.jobinfo { height: 20px; line-height: 17px; font-size: 15px; border: 1px solid #000; border-left: 0; background: #9cdbdb; padding-left: 1px; white-space: nowrap; }
.stepinfo { height: 19px; border-top-width: 0; }
.matrixbox { margin-top: 1px; border: 1px solid #000; border-left: 0; padding: 2px 2px 2px 1px; height: 27px; }
.matrix { display: block; width: 100%; height: 21px; text-align: left; padding-left: 2px; font-size: 15px; line-height: 15px; background: #9cdbdb; border: 2px solid; border-color: #c8f2ee #4f8482 #4f8482 #c8f2ee; }
.layerarea { flex: 1; display: flex; margin-top: 2px; padding-left: 1px; border-top: 3px solid #3a8070; border-bottom: 2px solid #a8ecd8; }
.layers { width: 123px; align-self: flex-start; border: 1px solid #000; padding: 2px 2px 9px 1px; display: flex; flex-direction: column; gap: 3px; box-shadow: 2px 0 #a8ecd8, 0 2px #a8ecd8; }
.grp { background: #000; padding: 2px; width: 117px; display: flex; flex-direction: column; gap: 2px; }
.row { display: flex; gap: 2px; height: 14px; }
.row input { appearance: none; width: 14px; height: 14px; margin: 0; border: 2px solid #fff; background: #fff; box-shadow: inset 0 0 0 2px #000; }
.row input:checked { border: 3px solid #0a0a90; box-shadow: none; }
.row i { width: 14px; height: 14px; }
.row i.red { background: #f00; }
.row i.work-layer { background: #449900; }
.row i svg { display: block; width: 14px; height: 14px; }
.row span { flex: 1; height: 14px; line-height: 13px; padding-left: 1px; background: #9cdbdb; display: flex; align-items: center; }
.row span.white { background: #fff; }
.row span.green { background: #00a67c; color: #062a20; }
.row span.gold { background: #ffc850; }
.row span.slate { background: #9ab4c0; }
.row span.grey { background: #d8d8d8; }
.mark { width: 5px; height: 5px; margin: 0 1px 0 auto; }
.selected { margin: 3px 0 0; height: 20px; line-height: 18px; padding-left: 2px; border: 1px solid #000; border-left: 0; background: #ffc850; }

.stage { flex: 1; position: relative; min-width: 0; overflow: hidden; }
.board { display: block; width: 100%; height: 100%; }

/* popup window floating on the canvas */
.popup {
  position: absolute; left: 662px; top: 190px; width: 387px; padding: 3px;
  background: #d4d0c8; border: 1px solid; border-color: #fff #707070 #707070 #fff;
}
.poptitle { height: 18px; padding: 0 2px; background: linear-gradient(90deg, #0a246a, #a6caf0); }
.poptitle .titletext { color: #fff; }
.popbody { display: flex; height: 351px; margin-top: 1px; background: #000; }
.popview { flex: 1; margin-right: 1px; border: 3px solid; border-color: #3a7c6c #b4efe0 #b4efe0 #3a7c6c; }
.popview svg { display: block; width: 100%; height: 100%; border: 1px solid #000; }
.poptools { width: 36px; display: flex; flex-direction: column; background: #56cfb0; border: 1px solid #000; }
.ptool { height: 35px; border-bottom: 2px solid #000; background: #56cfb0; display: flex; align-items: center; justify-content: center; }
.ptool .ico { width: 29px; height: 29px; border: 3px solid; border-color: #b8f0ec #4a8a84 #4a8a84 #b8f0ec; background: #9cdbdb; padding: 1px; outline: 1px solid #000; outline-offset: -5px; }
.popfoot { padding: 2px; background: #56cfb0; border: 1px solid #000; }
.popclose { display: block; width: 100%; height: 24px; font-size: 15px; background: #9cdbdb; border: 2px solid; border-color: #c8f2ee #4f8482 #4f8482 #c8f2ee; }

/* tool palette */
.tools { width: 163px; flex: none; display: flex; flex-direction: column; background: #000; border-left: 1px solid #3a7c6c; }
.grid { display: grid; grid-template-columns: repeat(4, 38px); gap: 2px; padding: 1px 3px 1px 2px; border-top: 1px solid #3a7c6c; border-right: 1px solid #56bfa4; }
.tool { height: 38px; padding: 1px; background: #9cdbdb; border: 3px solid; border-color: #c4f0ee #558c8a #558c8a #c4f0ee; }
.ico { display: block; width: 30px; height: 30px; border: 1px solid #000; }
.alert { border-color: #d01c24; }
.split { height: 4px; background: #6a8a80; border-top: 1px solid #b4efe0; border-bottom: 2px solid #c4c4c4; }
.edit { border-top: 0; padding-top: 1px; border-right-color: #999; }
.edit .tool { background: #d2d2d2; border-color: #f0f0f0 #8c8c8c #8c8c8c #f0f0f0; }
.edit .on { background: #fff; border-color: #fff #c4c4c4 #c4c4c4 #fff; }
.edit .amber { background: #ffc850; border-color: #ffe8a0 #8c7030 #8c7030 #ffe8a0; }
.edit .sel { border-color: #a08030 #ffd880 #ffd880 #a08030; }
.sel .ico { background: #000; }
.lower { border-top-color: #999; border-bottom-color: #4f8482; }
.overview { flex: 1; width: 100%; min-height: 0; }
.coords {
  height: 44px; padding: 5px 0 0 2px; font-size: 15px; line-height: 15px; white-space: nowrap;
  background: #56cfb0; border: 2px solid; border-color: #3a7c6c #a8ecd8 #a8ecd8 #56cfb0;
}

/* command line */
.cmd { display: flex; height: 35px; gap: 2px; padding: 2px 0; background: #000; }
.cbtn { width: 29px; height: 30px; padding: 2px; background: #ffffd0; border: 2px solid; border-color: #ffffe8 #a8a888 #a8a888 #ffffe8; box-shadow: inset 0 0 0 1px #c8c8a0; flex: none; }
.cbtn .ico { width: 21px; height: 21px; }
.cmark { padding: 2px; background: #56cfb0; margin-right: -1px; }
.cmark .cbtn { width: 26px; height: 27px; box-shadow: none; padding: 1px; border-color: #ffffe8 #a8987c #a8987c #ffffe8; }
.cmark .ico { width: 19px; height: 19px; margin: auto; }
.cbtn .noframe { border: 0; }
.xy { width: 47px; line-height: 30px; padding-left: 2px; background: #ffffd0; white-space: nowrap; }
.xyfield { width: 171px; padding: 0 4px; background: #ffffd0; border: 2px solid; border-color: #a8a080 #d0d0a8 #d0d0a8 #a8a080; box-shadow: inset 0 0 0 1px #d0d0a8; }
.message { flex: 1; line-height: 30px; padding-left: 2px; background: #ffffd0; white-space: nowrap; }
.unitbox { position: relative; width: 77px; padding: 2px 4px 2px 6px; background: #56cfb0; }
.unit { appearance: none; width: 100%; height: 27px; padding: 0 4px; background: #56cfb0; border: 2px solid; border-color: #a8ecd8 #2f6b5c #2f6b5c #a8ecd8; }
.knob { position: absolute; right: 10px; top: 13px; width: 12px; height: 7px; border: 2px solid; border-color: #a8ecd8 #2f6b5c #2f6b5c #a8ecd8; pointer-events: none; }
.statusbar { height: 32px; padding: 1px 0 2px; border-top: 2px solid #4f8482; background: #d8ffff; }
.status { height: 26px; line-height: 21px; text-align: center; background: #b4ffff; border: 2px solid; border-color: #e0ffff #5a8c8c #5a8c8c #e0ffff; outline: 1px solid #000; }
```
